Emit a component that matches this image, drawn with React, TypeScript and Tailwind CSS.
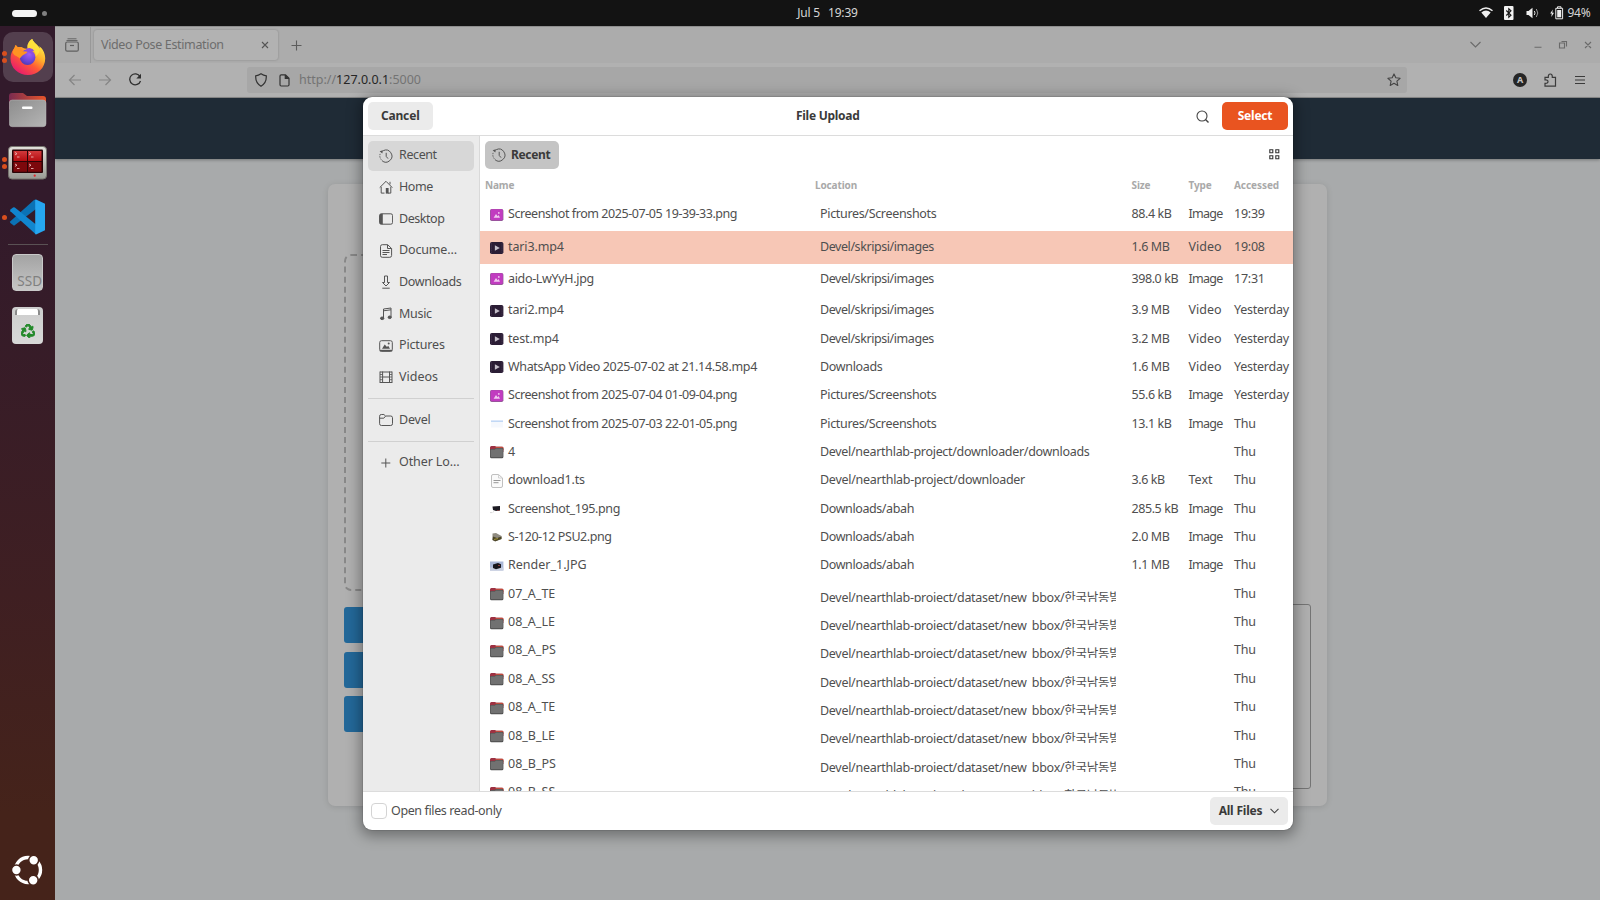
import React from 'react';
import { FaRecycle } from 'react-icons/fa';

type Kind = 'image' | 'video' | 'folder' | 'text' | 'thumbPage' | 'thumbDark' | 'thumbPsu' | 'thumbRender';
type FileRow = {
  name: string;
  nameTrack?: string;
  loc: string;
  locTrack?: string;
  size?: string;
  type?: string;
  at: string;
  kind: Kind;
  korean?: boolean;
  tall?: boolean;
  selected?: boolean;
};

const shotTrack = 'tracking-[-0.440px]';
const skripsi = { loc: 'Devel/skripsi/images', locTrack: 'tracking-[-0.430px]' };
const shots = { loc: 'Pictures/Screenshots', locTrack: 'tracking-[-0.330px]' };
const abah = { loc: 'Downloads/abah', locTrack: 'tracking-[-0.400px]' };
const bbox = 'Devel/nearthlab-project/dataset/new_bbox/한국남동발전';
const folders = ['07_A_TE', '08_A_LE', '08_A_PS', '08_A_SS', '08_A_TE', '08_B_LE', '08_B_PS', '08_B_SS'];

const files: FileRow[] = [
  { name: 'Screenshot from 2025-07-05 19-39-33.png', nameTrack: shotTrack, ...shots, size: '88.4 kB', type: 'Image', at: '19:39', kind: 'image', tall: true },
  { name: 'tari3.mp4', nameTrack: 'tracking-[-0.130px]', ...skripsi, size: '1.6 MB', type: 'Video', at: '19:08', kind: 'video', tall: true, selected: true },
  { name: 'aido-LwYyH.jpg', nameTrack: 'tracking-[-0.330px]', ...skripsi, size: '398.0 kB', type: 'Image', at: '17:31', kind: 'image', tall: true },
  { name: 'tari2.mp4', nameTrack: 'tracking-[-0.130px]', ...skripsi, size: '3.9 MB', type: 'Video', at: 'Yesterday', kind: 'video' },
  { name: 'test.mp4', nameTrack: 'tracking-[-0.150px]', ...skripsi, size: '3.2 MB', type: 'Video', at: 'Yesterday', kind: 'video' },
  { name: 'WhatsApp Video 2025-07-02 at 21.14.58.mp4', nameTrack: 'tracking-[-0.330px]', loc: 'Downloads', locTrack: 'tracking-[-0.340px]', size: '1.6 MB', type: 'Video', at: 'Yesterday', kind: 'video' },
  { name: 'Screenshot from 2025-07-04 01-09-04.png', nameTrack: shotTrack, ...shots, size: '55.6 kB', type: 'Image', at: 'Yesterday', kind: 'image' },
  { name: 'Screenshot from 2025-07-03 22-01-05.png', nameTrack: shotTrack, ...shots, size: '13.1 kB', type: 'Image', at: 'Thu', kind: 'thumbPage' },
  { name: '4', loc: 'Devel/nearthlab-project/downloader/downloads', locTrack: 'tracking-[-0.305px]', at: 'Thu', kind: 'folder' },
  { name: 'download1.ts', nameTrack: 'tracking-[-0.180px]', loc: 'Devel/nearthlab-project/downloader', locTrack: 'tracking-[-0.270px]', size: '3.6 kB', type: 'Text', at: 'Thu', kind: 'text' },
  { name: 'Screenshot_195.png', nameTrack: 'tracking-[-0.380px]', ...abah, size: '285.5 kB', type: 'Image', at: 'Thu', kind: 'thumbDark' },
  { name: 'S-120-12 PSU2.png', nameTrack: 'tracking-[-0.450px]', ...abah, size: '2.0 MB', type: 'Image', at: 'Thu', kind: 'thumbPsu' },
  { name: 'Render_1.JPG', ...abah, size: '1.1 MB', type: 'Image', at: 'Thu', kind: 'thumbRender' },
  ...folders.map((name): FileRow => ({ name, loc: bbox, at: 'Thu', kind: 'folder', korean: true })),
];

function FileIcon({ kind }: { kind: Kind }) {
  return (
    <svg width="14" height="14" viewBox="0 0 14 14" className="shrink-0">
      {kind === 'image' && (
        <>
          <rect x="0" y="1" width="13.4" height="12" rx="1.8" fill="#8d5a92" />
          <rect x="0.6" y="1.3" width="12.2" height="10.9" rx="1.4" fill="#c13cc0" />
          <path d="M3.6 9.7 6 6l1.6 2.2 1-1.2 1.4 2.7z" fill="#f0c9ef" />
          <circle cx="8.8" cy="4.9" r="0.9" fill="#f0c9ef" />
        </>
      )}
      {kind === 'video' && (
        <>
          <rect x="0" y="1" width="13.4" height="12" rx="1.8" fill="#2b1d35" />
          <path d="M1.4 2.3v9.4M12 2.3v9.4" stroke="#4a3a55" strokeWidth="0.9" strokeDasharray="1.2 0.9" />
          <path d="M4.9 4.2 9.8 7l-4.9 2.8z" fill="#c3bdc8" />
        </>
      )}
      {kind === 'folder' && (
        <>
          <path d="M0 2.400Q0 .9 1.400.9h3.700l1.200.9h5.800q1.300 0 1.300 1.300V7H0z" fill="#9d3142" />
          <path d="M6 1.800h6q1.400 0 1.400 1.300V5H4z" fill="#c04a3c" />
          <path d="M0 5q0-1 1.100-1h3.600l1.200-1h6.400q1.100 0 1.100 1v7.700q0 1.500-1.500 1.500H1.500Q0 13.200 0 11.700z" fill="#4d4d4d" />
          <path d="M.6 5q0-.6.7-.6h3.600l1.200-1h5.900q.8 0 .8.7v7.200q0 .9-1 .9H1.600q-1 0-1-.9z" fill="#717171" />
        </>
      )}
      {kind === 'text' && (
        <>
          <path d="M1.500 2q0-1.500 1.500-1.500h5.500L12.500 4v8q0 1.500-1.500 1.500H3q-1.500 0-1.500-1.500z" fill="#fafafa" stroke="#b9b9b9" strokeWidth="0.900" />
          <path d="M8.500.5V4h4" fill="none" stroke="#c9c9c9" strokeWidth="0.800" />
          <path d="M3.500 6.500h7M3.500 8.700h5" stroke="#8b8b8b" strokeWidth="0.900" />
        </>
      )}
      {kind === 'thumbPage' && (
        <>
          <rect x="1" y="3.500" width="12" height="7" fill="#f5f8fd" />
          <rect x="1" y="3.500" width="12" height="1.400" fill="#bcd4f4" />
        </>
      )}
      {kind === 'thumbDark' && (
        <>
          <path d="M2.500 4.500 10 4v4.500L6 9 3 8z" fill="#1c1a22" />
          <path d="M7 8.500h2.500" stroke="#7a3b3b" strokeWidth="0.800" />
          <path d="M0 10.600h2.500M3 9.800h1" stroke="#c8c8c8" strokeWidth="0.700" />
        </>
      )}
      {kind === 'thumbPsu' && (
        <>
          <path d="M2.500 3.500 6 3l5.500 3v3L5 11.500 2.500 10z" fill="#8f8b80" />
          <path d="M3 6.500 7 8l4.500-1.500V9L5.500 11.300 2.500 10z" fill="#4b4526" />
          <path d="M4 9.500 8 8.500" stroke="#a99a3b" strokeWidth="0.900" />
        </>
      )}
      {kind === 'thumbRender' && (
        <>
          <rect x="0" y="2.500" width="13.400" height="9" fill="#a9b7d6" />
          <rect x="0" y="8.500" width="13.400" height="3" fill="#c7cede" />
          <path d="M3 5.500 8 4l3 1.200v3.500L6 10.300 3 9z" fill="#17161b" />
          <path d="M8 6.500h2" stroke="#8b3c3a" strokeWidth="1" />
        </>
      )}
    </svg>
  );
}

function SideIcon({ name }: { name: string }) {
  return (
    <svg width="14" height="14" viewBox="0 0 14 14" fill="none" stroke="#555" strokeWidth="1" className="shrink-0">
      {name === 'recent' && (
        <>
          <path d="M4.200 1.700A6 6 0 1 1 2.900 11.600" />
          <path d="M2.300 10.700A6 6 0 0 1 1.400 4.200" strokeDasharray="1.300 1.100" />
          <path d="M.6 2.200 4 1.200 3.300 4.500z" fill="#555" stroke="none" />
          <path d="M7.200 3.800V7.400L9 9.600" />
        </>
      )}
      {name === 'home' && (
        <>
          <path d="M.7 7.600 7 1.300l6.300 6.300M2.200 6.800v6.300h3.300M11.800 6.800v6.300H9M11 1.800v2.600" />
          <rect x="6.800" y="8" width="2.800" height="5.600" fill="#555" stroke="none" />
        </>
      )}
      {name === 'desktop' && (
        <>
          <rect x="0.600" y="1.800" width="13" height="10.400" rx="1.800" />
          <path d="M.5 3.300q0-1.500 1.500-1.500h1.800v10.400H2q-1.500 0-1.500-1.500z" fill="#555" stroke="none" />
        </>
      )}
      {name === 'documents' && (
        <>
          <path d="M1.500 2.500q0-1.800 1.800-1.800h5.400L12.600 4.500v7q0 1.800-1.800 1.800H3.300q-1.800 0-1.800-1.800zM8.500.8v3.700h4" />
          <path d="M3.500 6.500h7M3.500 8.500h7M3.500 10.500h4.500" />
        </>
      )}
      {name === 'downloads' && (
        <>
          <path d="M5.500 1h3v6.500h2L7 11 3.500 7.500h2z" />
          <path d="M3.300 13.200h7.400" />
        </>
      )}
      {name === 'music' && (
        <>
          <path d="M4.500 11V2l7.500-1v9M4.500 3.800 12 2.800" />
          <ellipse cx="3.200" cy="11.300" rx="1.700" ry="1.300" fill="#555" />
          <ellipse cx="10.700" cy="10.300" rx="1.600" ry="1.300" fill="#555" />
        </>
      )}
      {name === 'pictures' && (
        <>
          <rect x="0.700" y="1.700" width="12.600" height="10.600" rx="1.800" />
          <path d="M.8 11.600h12.400" strokeWidth="1.600" />
          <path d="M3 9.700 5.700 5.500 8 8l1.200-1.200L11 9.700z" fill="#555" stroke="none" />
          <circle cx="9.700" cy="4.600" r="1" fill="#555" stroke="none" />
        </>
      )}
      {name === 'videos' && (
        <>
          <path d="M1 1.500v11.500M13 1.500v11.500M3.600 1.500v11.500M10.500 1.500v11.500M1 2h12M3.600 7h7M1 12.500h12" />
          <path d="M1 4.500h2.500M1 7h2.500M1 9.700h2.500M10.500 4.500H13M10.500 7H13M10.500 9.700H13" strokeWidth="0.800" />
        </>
      )}
      {name === 'folder' && <path d="M.6 3.200q0-1.700 1.700-1.700h2.600L6.500 3h5.200q1.800 0 1.800 1.700v6q0 1.800-1.800 1.800H2.400q-1.800 0-1.800-1.800zM.8 5.200h4L6.500 3.200" />}
      {name === 'plus' && <path d="M6.800 2.500v9M2.300 7h9" />}
    </svg>
  );
}

function SideRow({ icon, label, active, track = '' }: { icon: string; label: string; active?: boolean; track?: string }) {
  return (
    <div className="flex h-[31.670px] items-center">
      <div className={`flex h-[30px] w-full items-center gap-[6.500px] rounded-[5px] pl-[11px] ${active ? 'bg-[#d7d7d7]' : ''}`}>
        <SideIcon name={icon} />
        <span className={`whitespace-nowrap ${track}`}>{label}</span>
      </div>
    </div>
  );
}

function Dots({ n }: { n: number }) {
  return (
    <div className="flex w-[9px] shrink-0 flex-col items-center gap-[2px]">
      {Array.from({ length: n }, (_, i) => (
        <i key={i} className="block h-[5px] w-[5px] rounded-full bg-[#d94f1e]" />
      ))}
    </div>
  );
}

function Firefox() {
  return (
    <svg width="36" height="38" viewBox="0 0 36 38">
      <defs>
        <linearGradient id="ffBody" x1="0.850" y1="0.100" x2="0.250" y2="0.950">
          <stop offset="0" stopColor="#fff14a" />
          <stop offset="0.350" stopColor="#ffb02b" />
          <stop offset="0.620" stopColor="#ff5a36" />
          <stop offset="1" stopColor="#e81d6c" />
        </linearGradient>
        <radialGradient id="ffGlobe" cx="0.600" cy="0.300" r="0.800">
          <stop offset="0" stopColor="#a05cf5" />
          <stop offset="0.600" stopColor="#6a45d8" />
          <stop offset="1" stopColor="#4238a8" />
        </radialGradient>
      </defs>
      <path d="M22.300 1C23.500 5 28 6.500 29.500 10.500c.2-1 0-2-.3-2.500 4.500 3.500 6 8.500 6 12.500C35.200 30 27.600 37 18 37S.5 30 .5 20.500c0-4.500 1.500-8 4.500-11l.5-2.500c1 .5 1.600 1.200 2.200 2.200C9 8.800 10.800 8.800 12 9.200 13.500 10 15 11 17.500 10.500 17 7 18.500 3 22.300 1z" fill="url(#ffBody)" />
      <circle cx="17.600" cy="19.300" r="7.800" fill="url(#ffGlobe)" />
      <path d="M17 10.500q5-1.500 8 2.500-2.500-.5-3 .5 3 2.500 2 6-3-7-10-5.500z" fill="#8d4fe0" />
      <path d="M5.500 7c1 .5 1.600 1.200 2.200 2.200 1.500-.4 3-.3 4.300 0-.8 1-1.600 2-1.600 3.300 1.600.8 4.200.8 7 1.300-.2 1.700-2.600 2-4.200 3.100-1.400 1-2.400 2.600-3.600 3.500C7.500 18 3.500 18 2.500 14z" fill="#ff9423" />
      <path d="M22.300 1C18.500 3 17 7 17.800 10c4-.5 7.500 2 8.200 8 3-2 4-5 3.500-8C28 6.500 23.500 5 22.300 1z" fill="#ffe23c" opacity=".8" />
    </svg>
  );
}

function Terminator() {
  return (
    <svg width="39" height="34" viewBox="0 0 39 34">
      <defs>
        <linearGradient id="tmFrame" x1="0" y1="0" x2="0" y2="1">
          <stop offset="0" stopColor="#e2e2dc" />
          <stop offset="1" stopColor="#9a9a94" />
        </linearGradient>
        <linearGradient id="tmTop" x1="0" y1="0" x2="0" y2="1">
          <stop offset="0" stopColor="#d23a3c" />
          <stop offset="1" stopColor="#b40c10" />
        </linearGradient>
      </defs>
      <rect x="0.500" y="0.500" width="38" height="32.500" rx="3.500" fill="url(#tmFrame)" stroke="#77756f" />
      <rect x="4" y="3.500" width="31" height="23.500" rx="1" fill="#2a0508" />
      <path d="M5.500 5h13.500v10H5.500zM20 5h13.500v10H20z" fill="url(#tmTop)" />
      <path d="M5.500 16h13.500v9.800H5.500zM20 16h13.500v9.800H20z" fill="#7c080c" />
      <path d="M7 6.500l2 1.200-2 1.200M9 11h2.500M21 6.500l2 1.200-2 1.200M23 11h2.500M7 18l2 1.200-2 1.200M9 22.500h2.500M21 18l2 1.200-2 1.200M23 22.500h2.500" stroke="#eab4b4" strokeWidth=".9" fill="none" />
      <circle cx="26.700" cy="29.700" r="1.100" fill="#e5262b" />
    </svg>
  );
}

function Dock() {
  return (
    <aside className="flex w-[55px] shrink-0 flex-col bg-linear-to-b from-[#321a2b] from-20% via-[#3f1f22] via-65% to-[#45231a] to-90%">
      <div className="mt-[6px] ml-[2.500px] flex h-[50px] w-[50px] shrink-0 items-center rounded-[10px] bg-[#533f4e]">
        <div className="-ml-[2.500px] pr-[0.500px]">
          <Dots n={2} />
        </div>
        <Firefox />
      </div>
      <div className="mt-[10px] flex h-[36px] items-center pl-[9px]">
        <svg width="38" height="36" viewBox="0 0 38 36">
          <defs>
            <linearGradient id="fdTab" x1="0" x2="1">
              <stop offset="0" stopColor="#7a2b50" />
              <stop offset="1" stopColor="#e9552a" />
            </linearGradient>
            <linearGradient id="fdBody" x1="0" y1="0" x2="1" y2="1">
              <stop offset="0" stopColor="#8d8d8d" />
              <stop offset="1" stopColor="#b5b5b5" />
            </linearGradient>
          </defs>
          <path d="M0 4Q0 1 3 1h11l4 3h16q3 0 3 3v10H0z" fill="url(#fdTab)" />
          <rect x="0.300" y="8" width="36.700" height="26.700" rx="3" fill="url(#fdBody)" stroke="#b9b9b9" strokeWidth="0.500" />
          <rect x="13" y="14.500" width="10.500" height="2.600" rx="1" fill="#fff" />
        </svg>
      </div>
      <div className="mt-[18px] flex h-[34px] items-center">
        <div className="w-[8px]">
          <Dots n={2} />
        </div>
        <Terminator />
      </div>
      <div className="mt-[19px] flex h-[36px] items-center">
        <Dots n={1} />
        <svg width="36" height="36" viewBox="-1 0 36 36">
          <path d="M26 .5v9.500L4 26.700.4 24q-.8-.8 0-1.700L24 1z" fill="#0b72b5" />
          <path d="M.4 12.300Q-.3 11.400.4 10.600L3 8.600q.9-.6 1.800 0L26 25.500v10z" fill="#1186cf" />
          <path d="M26 .5 35 4.800v26.400l-9 4.300q-.8-.3-.8-1V1.500q0-.7.8-1z" fill="#26a6f0" />
        </svg>
      </div>
      <div className="mt-[9px] ml-[8px] h-px w-[40px] bg-[#5a5154]" />
      <div className="mt-[9px] ml-[12px] flex h-[37px] w-[31px] items-end justify-end overflow-hidden rounded-[4px] border border-[#c9c9c9] bg-linear-to-b from-[#a3a3a3] to-[#c6c6c6]">
        <span className="mb-[1px] text-[13.500px] leading-[16px] text-[#808080]">SSD</span>
      </div>
      <div className="mt-[16px] ml-[12px] flex h-[37px] w-[31px] flex-col items-center rounded-[4px] bg-linear-to-b from-[#cdcdcd] to-[#d8d8d8]">
        <div className="mt-[2px] h-[6px] w-[25px] rounded-t-[3px] border-x-2 border-[#8b8b8b] bg-white" />
        <FaRecycle className="mt-[8.500px] text-[14px] text-[#23892a]" stroke="#23892a" strokeWidth={36} />
      </div>
      <div className="mt-auto mb-[14px] ml-[11px]">
        <svg width="32" height="32" viewBox="0 0 32 32" fill="none">
          <circle cx="17" cy="16" r="12.500" stroke="#fff" strokeWidth="3.400" />
          <g stroke="#45231a" strokeWidth="1.600" fill="#fff">
            <circle cx="5.400" cy="16" r="5" />
            <circle cx="22.700" cy="6.300" r="5" />
            <circle cx="22.200" cy="26.200" r="5" />
          </g>
        </svg>
      </div>
    </aside>
  );
}

function TopBar() {
  return (
    <header className="grid h-[26px] shrink-0 grid-cols-[1fr_auto_1fr] items-center bg-[#131313] text-[12.500px] text-[#d6d6d6]">
      <div className="flex items-center gap-[5px] pl-[12px]">
        <i className="block h-[7px] w-[25px] rounded-full bg-[#f4f4f4]" />
        <i className="block h-[5px] w-[5px] rounded-full bg-[#808080]" />
      </div>
      <div className="ml-[55px] flex gap-[8px] text-[12px] tracking-[-0.200px]">
        <span>Jul 5</span>
        <span>19:39</span>
      </div>
      <div className="flex items-center justify-end pr-[9.500px]">
        <svg width="14" height="12" viewBox="0 0 14 12" className="mr-[11px]">
          <path d="M.5 3.800Q7-1.800 13.500 3.800" fill="none" stroke="#eee" strokeWidth="1.400" />
          <path d="M2.300 5.500Q7 1.500 11.700 5.500L7 11z" fill="#eee" />
        </svg>
        <svg width="10" height="14" viewBox="0 0 10 14" className="mr-[12px]">
          <rect width="9.500" height="14" rx="1" fill="#f2f2f2" />
          <path d="M2.300 4.500 7 9.200 4.800 11.200V2.800L7 4.800 2.300 9.500" fill="none" stroke="#131313" strokeWidth="1.100" />
        </svg>
        <svg width="14" height="12" viewBox="0 0 14 12" className="mr-[10px]">
          <path d="M.5 4h2L6.500.7v10.600L2.500 8h-2z" fill="#eee" />
          <path d="M8.300 4q1.500 2 0 4" fill="none" stroke="#ddd" />
          <path d="M10.300 2q3 4 0 8" fill="none" stroke="#999" />
        </svg>
        <svg width="14" height="14" viewBox="0 0 14 14" className="mr-[3px]">
          <path d="M2.800 3.500.2 7.600h1.600L1.300 11l2.700-4.300H2.300z" fill="#eee" />
          <path d="M5.800 2.300h6.800v10.500H5.800zM7.500 2V.8h3.500V2" fill="none" stroke="#eee" />
          <rect x="7.200" y="4" width="4" height="7.300" fill="#eee" />
        </svg>
        <span className="text-[12px] tracking-[-0.200px]">94%</span>
      </div>
    </header>
  );
}

function BrowserChrome() {
  return (
    <>
      <div className="flex h-[37px] shrink-0 items-center border-t border-[#8f8f8f] bg-[#acacac] text-[#6d6d6d]">
        <svg width="14" height="14" viewBox="0 0 14 14" fill="none" stroke="#5f5f5f" strokeWidth="1.200" className="ml-[10px]">
          <rect x="0.700" y="4" width="12.600" height="9.200" rx="1.500" />
          <path d="M2.500.8h9M1.500 2.500h11" strokeWidth=".9" />
          <path d="M5 7.500h4" />
        </svg>
        <div className="ml-[11px] h-full w-px bg-[#989898]" />
        <div className="ml-[3px] flex h-[30px] w-[184px] items-center rounded-[3px] bg-[#b2b2b2] pr-[9px] pl-[7px] shadow-[0_0_2px_rgba(0,0,0,0.250)]">
          <span className="text-[12.500px] tracking-[-0.350px] whitespace-nowrap">Video Pose Estimation</span>
          <svg width="8" height="8" viewBox="0 0 8 8" stroke="#555" strokeWidth="1.100" className="ml-auto">
            <path d="M1 1l6 6M7 1 1 7" />
          </svg>
        </div>
        <svg width="11" height="11" viewBox="0 0 11 11" stroke="#5c5c5c" strokeWidth="1.100" className="ml-[13px]">
          <path d="M5.500.5v10M.5 5.500h10" />
        </svg>
        <svg width="122" height="12" viewBox="0 0 122 12" fill="none" stroke="#6a6a6a" strokeWidth="1.100" className="mr-[8.500px] ml-auto">
          <path d="M.5 3 5.500 8l5-5M64.500 8.200h7M115 3l6 6M121 3l-6 6" />
          <path d="M89.500 4h5v5h-5zM91.500 2.500h5v5" />
        </svg>
      </div>
      <div className="flex h-[35px] shrink-0 items-center border-b border-[#8b8b8b] bg-[#b1b1b1]">
        <svg width="74" height="14" viewBox="0 0 74 14" fill="none" className="ml-[13px]">
          <path d="M13 7H1.500M6.500 2l-5 5 5 5M31 7h11.500M37.500 2l5 5-5 5" stroke="#858585" strokeWidth="1.200" />
          <path d="M72 3.500A5.500 5.500 0 1 0 72.500 8" stroke="#2f2f2f" strokeWidth="1.300" />
          <path d="M73 .8v4.700h-4.700z" fill="#2f2f2f" />
        </svg>
        <div className="ml-[105px] flex h-[26px] w-[1160px] items-center rounded-[3px] bg-[#a7a7a7] text-[12.500px]">
          <svg width="12" height="14" viewBox="0 0 12 14" fill="none" stroke="#333" strokeWidth="1.200" className="ml-[8px]">
            <path d="M6 .8Q8.500 2.500 11.300 2.800q.4 7-5.300 10.400Q.3 9.800.7 2.800 3.500 2.500 6 .8z" />
          </svg>
          <svg width="11" height="13" viewBox="0 0 11 13" fill="none" stroke="#333" strokeWidth="1.200" className="ml-[12px]">
            <path d="M1 2q0-1.200 1.200-1.200H6.500L10 4.300v6.500q0 1.200-1.200 1.200H2.200Q1 12 1 10.800z" />
            <path d="M6.300 1v3.500H10" fill="#333" />
          </svg>
          <span className="ml-[9px] text-[#747474]">
            http://<span className="text-[#262626]">127.0.0.1</span>:5000
          </span>
          <svg width="14" height="14" viewBox="0 0 14 14" fill="none" stroke="#444" strokeWidth="1.100" strokeLinejoin="round" className="mr-[6px] ml-auto">
            <path d="M7 .9 8.800 4.800l4.300.5L9.900 8.200l.9 4.300L7 10.300 3.200 12.500l.9-4.300L.9 5.300l4.300-.5z" />
          </svg>
        </div>
        <div className="ml-auto flex h-[14px] w-[14px] items-center justify-center rounded-full bg-[#262626] text-[9px] font-bold text-[#c5c5c5]">A</div>
        <svg width="13" height="14" viewBox="0 0 13 14" fill="none" stroke="#3b3b3b" strokeWidth="1.200" className="ml-[17px]">
          <path d="M1 13.200h10.500V4.300H8.300q.2-3.300-2-3.300t-2 3.300H1v2.600q3-.3 3 1.700T1 10.400z" />
        </svg>
        <svg width="12" height="10" viewBox="0 0 12 10" stroke="#3b3b3b" strokeWidth="1.200" className="mr-[14px] ml-[17px]">
          <path d="M1 1.500h10M1 5h10M1 8.500h10" />
        </svg>
      </div>
    </>
  );
}

function PageBehind() {
  return (
    <div className="flex min-h-0 flex-1 flex-col bg-[#a8aaab]">
      <div className="h-[61px] shrink-0 bg-[#1f2b36] shadow-[0_1px_3px_rgba(0,0,0,0.300)]" />
      <div className="mt-[25px] ml-[272.500px] flex h-[622px] w-[999.500px] shrink-0 rounded-[7px] bg-[#b0b0b0] px-[16.500px] shadow-[0_1px_6px_rgba(0,0,0,0.120)]">
        <div className="w-[480px]">
          <div className="mt-[70px] h-[337px] rounded-[7px] border-2 border-dashed border-[#888]" />
          <div className="mt-[16px] flex flex-col gap-[8.500px]">
            <div className="h-[36px] rounded-[3px] bg-[#236899]" />
            <div className="h-[36px] rounded-[3px] bg-[#236899]" />
            <div className="h-[36px] rounded-[3px] bg-[#236899]" />
          </div>
        </div>
        <div className="mt-[420px] ml-[20px] h-[185px] flex-1 rounded-[3px] border border-[#757575]" />
      </div>
    </div>
  );
}

const cols = 'grid grid-cols-[330px_316.500px_57px_45.500px_1fr]';

function FileLine({ f }: { f: FileRow }) {
  const height = f.tall ? (f.selected ? 'h-[32.400px]' : 'h-[32.400px] pb-[1px]') : 'h-[28.350px] pt-[0.800px]';
  return (
    <div className={`${cols} items-center pl-[5.500px] whitespace-nowrap ${height} ${f.selected ? 'bg-[#f7c7b6]' : ''}`}>
      <div className="flex items-center gap-[4px] pl-[5px]">
        <FileIcon kind={f.kind} />
        <span className={f.nameTrack}>{f.name}</span>
      </div>
      {f.korean ? (
        <div className="ml-[5px] h-[15px] w-[296px] overflow-hidden pt-[1px] leading-[19px] tracking-[-0.290px]">{f.loc}</div>
      ) : (
        <div className={`pl-[5px] ${f.locTrack ?? ''}`}>{f.loc}</div>
      )}
      <div className="tracking-[-0.420px]">{f.size}</div>
      <div className={f.type === 'Image' ? 'tracking-[-0.700px]' : ''}>{f.type}</div>
      <div className="tracking-[-0.240px]">{f.at}</div>
    </div>
  );
}

function FileDialog() {
  return (
    <div
      role="dialog"
      className="absolute top-[97px] left-[362.500px] flex h-[733px] w-[930.500px] flex-col overflow-hidden rounded-[9px] bg-white text-[12.500px] text-[#4f4f4f] shadow-[0_3px_14px_3px_rgba(0,0,0,0.350),0_0_0_1px_rgba(0,0,0,0.080)]"
    >
      <div className="grid h-[39px] shrink-0 grid-cols-[1fr_auto_1fr] items-center border-b border-[#dcdcdc] px-[5px] font-bold text-[#3a3a3a]">
        <button className="h-[28px] w-[65.500px] rounded-[5px] bg-[#ebebeb] text-[12px] tracking-[-0.150px]">Cancel</button>
        <span className="text-[12px] tracking-[-0.270px]">File Upload</span>
        <div className="flex items-center justify-end">
          <svg width="13" height="13" viewBox="0 0 13 13" fill="none" stroke="#444" strokeWidth="1.100" className="mr-[13px]">
            <circle cx="6" cy="6" r="5" />
            <path d="M9.500 9.500l3 3" strokeWidth="1.400" />
          </svg>
          <button className="h-[28.500px] w-[66px] rounded-[5px] bg-[#e95420] text-[12px] tracking-[-0.200px] text-white">Select</button>
        </div>
      </div>
      <div className="flex min-h-0 flex-1">
        <nav className="w-[117px] shrink-0 border-r border-[#d9d9d9] bg-[#ebebeb] px-[5px] pt-[4px]">
          <SideRow icon="recent" label="Recent" track="tracking-[-0.400px]" active />
          <SideRow icon="home" label="Home" track="tracking-[-0.400px]" />
          <SideRow icon="desktop" label="Desktop" track="tracking-[-0.450px]" />
          <SideRow icon="documents" label="Docume…" track="tracking-[-0.150px]" />
          <SideRow icon="downloads" label="Downloads" track="tracking-[-0.340px]" />
          <SideRow icon="music" label="Music" track="tracking-[-0.300px]" />
          <SideRow icon="pictures" label="Pictures" track="tracking-[-0.150px]" />
          <SideRow icon="videos" label="Videos" />
          <div className="my-[5px] h-px bg-[#d0d0d0]" />
          <SideRow icon="folder" label="Devel" track="tracking-[-0.200px]" />
          <div className="my-[5px] h-px bg-[#d0d0d0]" />
          <SideRow icon="plus" label="Other Lo…" track="tracking-[-0.100px]" />
        </nav>
        <section className="flex min-w-0 flex-1 flex-col overflow-hidden">
          <div className="mt-[4.500px] flex h-[28px] shrink-0 items-center pl-[5px]">
            <div className="flex h-[28px] w-[74px] items-center gap-[5.500px] rounded-[5px] bg-[#c4c4c4] pl-[7px] text-[12px] font-bold tracking-[-0.350px] text-[#3a3a3a]">
              <SideIcon name="recent" />
              <span>Recent</span>
            </div>
            <svg width="11" height="11" viewBox="0 0 11 11" fill="none" stroke="#333" strokeWidth="1.100" className="mr-[13.500px] ml-auto">
              <path d="M.8.8h3v3h-3zM6.800.8h3v3h-3zM.8 6.800h3v3h-3zM6.800 6.800h3v3h-3z" />
            </svg>
          </div>
          <div className={`${cols} h-[30.500px] shrink-0 items-center pt-[2.500px] pl-[5.500px] text-[10px] font-bold tracking-[-0.130px] text-[#a9a9a9]`}>
            <span>Name</span>
            <span>Location</span>
            <span>Size</span>
            <span>Type</span>
            <span className="tracking-[-0.050px]">Accessed</span>
          </div>
          <div className="min-h-0 flex-1 overflow-hidden">
            {files.map((f) => (
              <FileLine key={f.name} f={f} />
            ))}
          </div>
        </section>
      </div>
      <div className="flex h-[39px] shrink-0 items-center border-t border-[#dcdcdc] px-[5px]">
        <i className="ml-[3.500px] block h-[16px] w-[16px] rounded-[4px] border border-[#d4d4d4]" />
        <span className="ml-[4px] tracking-[-0.380px]">Open files read-only</span>
        <button className="ml-auto flex h-[28px] w-[78px] items-center justify-center gap-[8px] rounded-[5px] bg-[#ebebeb] text-[12px] font-bold tracking-[-0.200px] text-[#3a3a3a]">
          All Files
          <svg width="9" height="6" viewBox="0 0 9 6" fill="none" stroke="#444" strokeWidth="1.100">
            <path d="M.5.8l4 4 4-4" />
          </svg>
        </button>
      </div>
    </div>
  );
}

export default function App() {
  return (
    <div className="relative flex h-[900px] w-[1600px] flex-col overflow-hidden bg-[#131313] font-['Noto_Sans','Noto_Sans_CJK_KR',sans-serif]">
      <TopBar />
      <div className="flex min-h-0 flex-1">
        <Dock />
        <main className="flex min-w-0 flex-1 flex-col">
          <BrowserChrome />
          <PageBehind />
        </main>
      </div>
      <FileDialog />
    </div>
  );
}
